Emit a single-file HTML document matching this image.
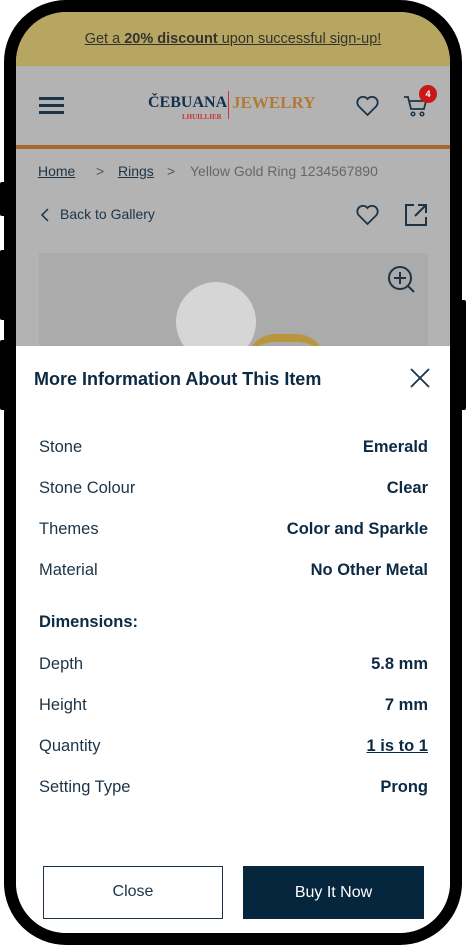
<!DOCTYPE html>
<html><head><meta charset="utf-8"><style>
*{margin:0;padding:0;box-sizing:border-box}
html,body{width:466px;height:945px;background:#fff;overflow:hidden;font-family:"Liberation Sans",sans-serif}
.btn{position:absolute;background:#000}
.frame{position:absolute;left:4px;top:0;width:458px;height:945px;background:#000;border-radius:62px}
.screen{position:absolute;left:16px;top:12px;width:434px;height:921px;border-radius:50px;overflow:hidden;background:#b3b3b3}
.banner{position:absolute;left:0;top:0;width:434px;height:54px;background:#b7a660;text-align:center;font-size:14.5px;color:#333;line-height:54px}
.banner span{text-decoration:underline}
.hdr{position:absolute;left:0;top:54px;width:434px;height:79px;background:#b3b3b3}
.oline{position:absolute;left:0;top:133px;width:434px;height:4px;background:#a8682a}
.t{position:absolute;white-space:nowrap}
.modal{position:absolute;left:0;top:334px;width:434px;height:600px;background:#fff}
.lab{position:absolute;left:23px;font-size:16.5px;color:#1d3447}
.val{position:absolute;right:22px;font-size:16.5px;font-weight:bold;color:#0c2a44}
</style></head><body>
<div class="btn" style="left:0;top:182px;width:8px;height:34px;border-radius:2px"></div>
<div class="btn" style="left:0;top:250px;width:8px;height:70px;border-radius:2px"></div>
<div class="btn" style="left:0;top:340px;width:8px;height:70px;border-radius:2px"></div>
<div class="btn" style="left:458px;top:300px;width:8px;height:110px;border-radius:2px"></div>
<div class="frame"></div>
<div class="screen">
 <div class="banner"><span>Get a <b>20% discount</b> upon successful sign-up!</span></div>
 <div class="hdr">
  <div style="position:absolute;left:23px;top:31px;width:25px;height:3px;background:#1d3447;box-shadow:0 7px 0 #1d3447,0 14px 0 #1d3447"></div>
  <div class="t" style="left:132px;top:28px;font-family:'Liberation Serif',serif;font-weight:bold;font-size:16px;color:#13304a">ČEBUANA</div>
  <div class="t" style="left:166px;top:47px;font-family:'Liberation Serif',serif;font-weight:bold;font-size:7px;color:#c33">LHUILLIER</div>
  <div style="position:absolute;left:212px;top:25px;width:1px;height:28px;background:#c33"></div>
  <div class="t" style="left:216px;top:27px;font-family:'Liberation Serif',serif;font-weight:bold;font-size:17px;color:#b27a36">JEWELRY</div>
  <svg style="position:absolute;left:339px;top:29px" width="25" height="22" viewBox="0 0 24 22"><path d="M12 20 L3 11 A5 5 0 0 1 12 4 A5 5 0 0 1 21 11 Z" fill="none" stroke="#1d3447" stroke-width="1.8"/></svg>
  <svg style="position:absolute;left:387px;top:28px" width="26" height="24" viewBox="0 0 26 24"><path d="M1 3h4l3 12h13l2-8H7" fill="none" stroke="#1d3447" stroke-width="1.8"/><circle cx="10" cy="20" r="1.8" fill="none" stroke="#1d3447" stroke-width="1.5"/><circle cx="19" cy="20" r="1.8" fill="none" stroke="#1d3447" stroke-width="1.5"/></svg>
  <div style="position:absolute;left:403px;top:19px;width:18px;height:18px;border-radius:50%;background:#c81818;color:#fff;font-size:9px;font-weight:bold;text-align:center;line-height:18px">4</div>
 </div>
 <div class="oline"></div>
 <div class="t" style="left:22px;top:151px;font-size:14px;color:#1d3447;text-decoration:underline">Home</div>
 <div class="t" style="left:80px;top:151px;font-size:14px;color:#555">&gt;</div>
 <div class="t" style="left:102px;top:151px;font-size:14px;color:#1d3447;text-decoration:underline">Rings</div>
 <div class="t" style="left:151px;top:151px;font-size:14px;color:#555">&gt;</div>
 <div class="t" style="left:174px;top:151px;font-size:14px;color:#666">Yellow Gold Ring 1234567890</div>
 <svg style="position:absolute;left:24px;top:195px" width="10" height="16"><path d="M8 2L2 8l6 6" fill="none" stroke="#1d3447" stroke-width="1.5"/></svg>
 <div class="t" style="left:44px;top:194px;font-size:14px;color:#1d3447">Back to Gallery</div>
 <svg style="position:absolute;left:339px;top:192px" width="25" height="22" viewBox="0 0 24 22"><path d="M12 20 L3 11 A5 5 0 0 1 12 4 A5 5 0 0 1 21 11 Z" fill="none" stroke="#1d3447" stroke-width="1.8"/></svg>
 <svg style="position:absolute;left:388px;top:191px" width="24" height="24"><path d="M10 2H2v20h20v-8M14 2h8v8M22 2L11 13" fill="none" stroke="#1d3447" stroke-width="2"/></svg>
 <div style="position:absolute;left:23px;top:241px;width:389px;height:100px;background:#ababab"></div>
 <svg style="position:absolute;left:371px;top:253px" width="30" height="30"><circle cx="13" cy="13" r="11" fill="none" stroke="#1d3447" stroke-width="2"/><path d="M13 7v12M7 13h12M21 21l6 6" stroke="#1d3447" stroke-width="2"/></svg>
 <div style="position:absolute;left:160px;top:270px;width:80px;height:80px;border-radius:50%;background:#d6d6d6"></div>
 <div style="position:absolute;left:230px;top:322px;width:80px;height:30px;border-top:8px solid #b89640;border-radius:40px 40px 0 0"></div>
 <div class="modal">
  <div class="t" style="left:18px;top:23px;font-size:18px;font-weight:bold;color:#0c2a44">More Information About This Item</div>
  <svg style="position:absolute;left:393px;top:21px" width="22" height="22"><path d="M2 2L20 20M20 2L2 20" stroke="#1d3447" stroke-width="1.8"/></svg>
  <div class="lab" style="top:92px">Stone</div><div class="val" style="top:92px">Emerald</div>
  <div class="lab" style="top:133px">Stone Colour</div><div class="val" style="top:133px">Clear</div>
  <div class="lab" style="top:174px">Themes</div><div class="val" style="top:174px">Color and Sparkle</div>
  <div class="lab" style="top:215px">Material</div><div class="val" style="top:215px">No Other Metal</div>
  <div class="lab" style="top:267px;font-weight:bold;color:#0c2a44">Dimensions:</div>
  <div class="lab" style="top:309px">Depth</div><div class="val" style="top:309px">5.8 mm</div>
  <div class="lab" style="top:350px">Height</div><div class="val" style="top:350px">7 mm</div>
  <div class="lab" style="top:391px">Quantity</div><div class="val" style="top:391px;text-decoration:underline">1 is to 1</div>
  <div class="lab" style="top:432px">Setting Type</div><div class="val" style="top:432px">Prong</div>
  <div style="position:absolute;left:27px;top:520px;width:180px;height:53px;border:1.5px solid #1d3447;text-align:center;line-height:50px;font-size:16px;color:#1d3447">Close</div>
  <div style="position:absolute;left:227px;top:520px;width:181px;height:53px;background:#06263e;text-align:center;line-height:53px;font-size:16px;color:#fff">Buy It Now</div>
 </div>
</div>
</body></html>
